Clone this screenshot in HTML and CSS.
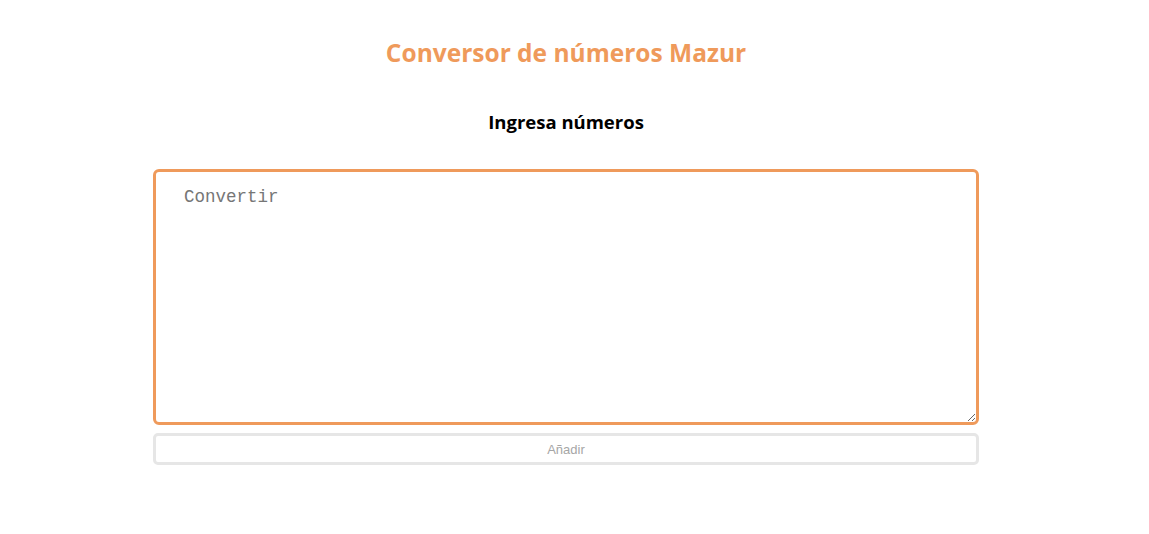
FILE: index.html
```html
<!DOCTYPE html>
<html lang="es">
<head>
<meta charset="utf-8">
<title>Conversor de números Mazur</title>
<link rel="stylesheet" href="styles.css">
</head>
<body>
<main class="app">
  <h1 class="title">Conversor de números Mazur</h1>
  <h2 class="subtitle">Ingresa números</h2>
  <textarea class="input" placeholder="Convertir"></textarea>
  <button class="add" type="button">Añadir</button>
</main>
</body>
</html>
```
FILE: styles.css
```css
body {
  margin: 0;
  background: #ffffff;
  font-family: "Open Sans", "Noto Sans", sans-serif;
}
.app {
  width: 826px;
  margin-left: 153px;
  display: flex;
  flex-direction: column;
  align-items: stretch;
  padding-top: 36px;
}
.title {
  margin: 0;
  text-align: center;
  color: #ef9a5b;
  font-size: 24.5px;
  font-weight: 700;
  line-height: 34px;
}
.subtitle {
  margin: 39px 0 0;
  text-align: center;
  color: #000;
  font-size: 18.5px;
  font-weight: 700;
  line-height: 26px;
}
.input {
  margin-top: 34px;
  box-sizing: border-box;
  height: 256px;
  border: 3px solid #ef9a5b;
  border-radius: 6px;
  padding: 15px 28px;
  font-family: "Liberation Mono", "DejaVu Sans Mono", monospace;
  font-size: 17.5px;
  color: #333;
  outline: none;
  resize: vertical;
}
.input::placeholder {
  color: #767676;
}
.add {
  margin-top: 8px;
  box-sizing: border-box;
  height: 32px;
  border: 3px solid #e6e6e6;
  border-radius: 5px;
  background: #fff;
  color: #a6a6a6;
  font-family: "Liberation Sans", Arial, sans-serif;
  font-size: 13px;
  padding: 0;
}
```
